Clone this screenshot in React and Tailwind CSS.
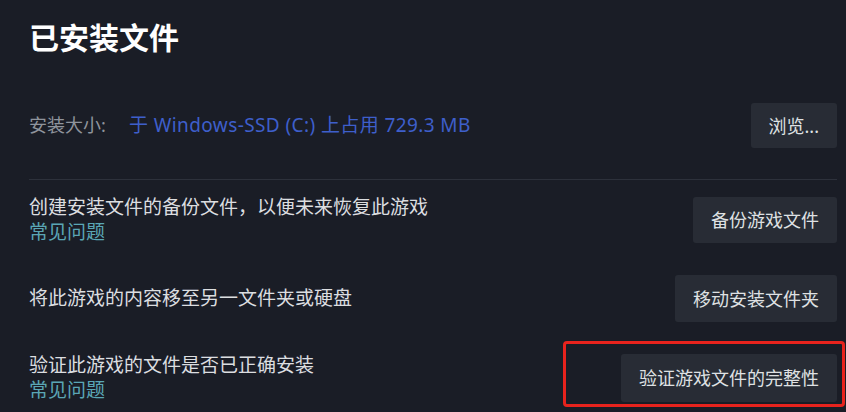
import React from "react";

const font = { fontFamily: '"Noto Sans", "Noto Sans CJK SC", sans-serif' };

function Btn({ children, className = "" }) {
  return (
    <button
      className={
        "shrink-0 whitespace-nowrap rounded-[3px] bg-[#282c35] px-[18px] text-[18px] leading-none text-[#dfe1e3] " +
        className
      }
    >
      {children}
    </button>
  );
}

export default function App() {
  return (
    <div
      className="relative h-[412px] w-[846px] overflow-hidden bg-[#1a1d26] pl-[29px] pr-[9px]"
      style={font}
    >
      <h1 className="pt-[20px] text-[30px] font-bold leading-[36px] text-white">已安装文件</h1>

      <div className="mt-[47px] flex h-[45px] items-center justify-between">
        <div className="flex items-baseline whitespace-nowrap">
          <span className="w-[100px] text-[18px] leading-[25px] text-[#8f949c]">安装大小:</span>
          <span className="text-[19px] leading-[25px] tracking-[0.4px] text-[#3e5fcb]">
            于 Windows-SSD (C:) 上占用 729.3 MB
          </span>
        </div>
        <Btn className="h-[45px]">浏览...</Btn>
      </div>

      <div className="mt-[31px] h-px bg-[#2d313b]" />

      <div className="mt-[17px] flex h-[46px] items-center justify-between">
        <div className="text-[19px] leading-[25px]">
          <div className="text-[#dcdee0]">创建安装文件的备份文件，以便未来恢复此游戏</div>
          <div className="text-[#5aa6b5]">常见问题</div>
        </div>
        <Btn className="h-[46px]">备份游戏文件</Btn>
      </div>

      <div className="mt-[32px] flex h-[47px] items-center justify-between">
        <div className="text-[19px] leading-[25px] text-[#dcdee0]">将此游戏的内容移至另一文件夹或硬盘</div>
        <Btn className="h-[47px]">移动安装文件夹</Btn>
      </div>

      <div className="mt-[32px] flex h-[48px] items-center justify-between">
        <div className="text-[19px] leading-[25px]">
          <div className="text-[#dcdee0]">验证此游戏的文件是否已正确安装</div>
          <div className="text-[#5aa6b5]">常见问题</div>
        </div>
        <div className="relative">
          <Btn className="h-[48px]">验证游戏文件的完整性</Btn>
          <div className="pointer-events-none absolute -bottom-[5px] -left-[58px] -right-[8px] -top-[13px] rounded-[4px] border-[3px] border-[#e8231d]" />
        </div>
      </div>
    </div>
  );
}
